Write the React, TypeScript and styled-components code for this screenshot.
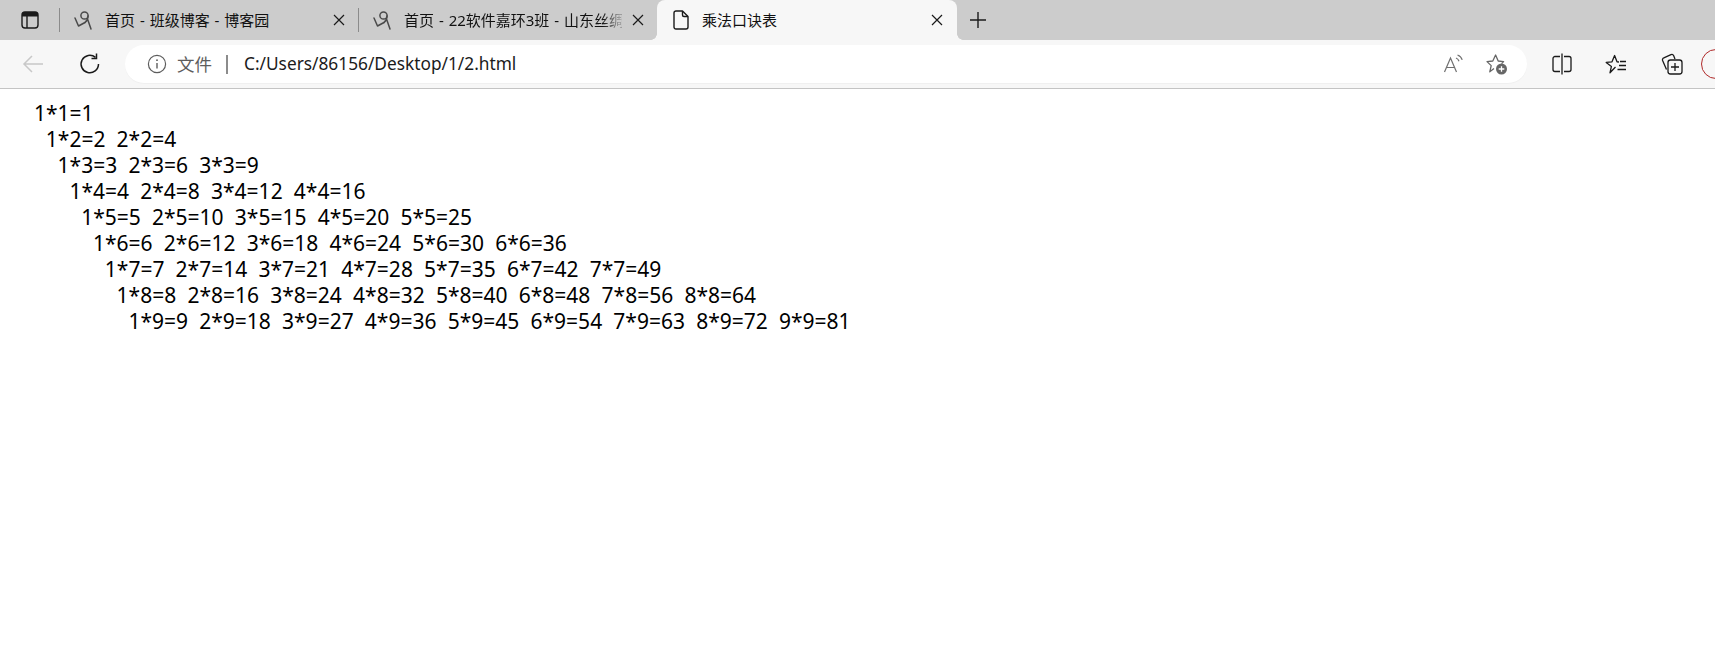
import React from "react";
import styled, { createGlobalStyle } from "styled-components";

const Global = createGlobalStyle`
  html, body { margin: 0; padding: 0; background: #fff; overflow: hidden; }
  body { font-family: "Noto Sans", "Noto Sans CJK SC", sans-serif; }
`;
const Page = styled.div`width: 1715px; height: 667px; overflow: hidden; display: flex; flex-direction: column;`;
const TabStrip = styled.div`height: 40px; background: #ccc; display: flex; align-items: stretch; flex-shrink: 0;`;
const SideButton = styled.div`width: 59px; display: flex; align-items: center; justify-content: center; color: #1a1a1a;`;
const Sep = styled.div`width: 1px; height: 24px; margin-top: 8px; background: #8b8b8b;`;
const Tab = styled.div<{ $active?: boolean }>`
  position: relative; width: ${p => (p.$active ? 300 : 298)}px; height: 40px; box-sizing: border-box;
  display: flex; align-items: center; padding: 0 ${p => (p.$active ? 12 : 11)}px 0 ${p => (p.$active ? 15 : 14)}px;
  background: ${p => (p.$active ? "#f7f7f7" : "transparent")};
  border-radius: ${p => (p.$active ? "8px 8px 0 0" : "0")};
  ${p => p.$active && `
    &::before, &::after { content: ""; position: absolute; bottom: 0; width: 6px; height: 6px; }
    &::before { left: -6px; background: radial-gradient(circle at 0 0, transparent 5.5px, #f7f7f7 6px); }
    &::after { right: -6px; background: radial-gradient(circle at 100% 0, transparent 5.5px, #f7f7f7 6px); }
  `}
`;
const TabIcon = styled.div<{ $gap: number }>`width: 18px; height: 20px; margin-right: ${p => p.$gap}px; flex-shrink: 0; display: flex; align-items: center; justify-content: center;`;
const TabTitle = styled.div<{ $fade?: boolean }>`
  flex: 1; min-width: 0; font-size: 15px; word-spacing: 1px; color: #111; white-space: nowrap; line-height: 20px;
  ${p => p.$fade && `-webkit-mask-image: linear-gradient(to right, #000 91%, rgba(0,0,0,.25) 99%); mask-image: linear-gradient(to right, #000 91%, rgba(0,0,0,.25) 99%);`}
`;
const CloseBox = styled.div`width: 16px; height: 16px; flex-shrink: 0; margin-left: 8px; display: flex; align-items: center; justify-content: center;`;
const NewTab = styled.div`width: 42px; display: flex; align-items: center; justify-content: center;`;
const Toolbar = styled.div`height: 48px; background: #f7f7f7; border-bottom: 1px solid #c4c4c4; display: flex; align-items: center; flex-shrink: 0; overflow: hidden; padding-left: 22px;`;
const NavIcon = styled.div<{ $w: number }>`width: ${p => p.$w}px; height: 24px; flex-shrink: 0; display: flex; align-items: center;`;
const Omnibox = styled.div`
  width: 1402px; height: 38px; background: #fff; border-radius: 19px; display: flex; align-items: center;
  flex-shrink: 0; padding: 0 19px 0 22px; box-sizing: border-box; box-shadow: 0 1px 1px rgba(0,0,0,.03);
`;
const Security = styled.span`font-size: 17.5px; color: #5d5d5d; margin-left: 10px; line-height: 24px;`;
const Divider = styled.div`width: 2px; height: 19px; background: #8c8c8c; margin: 0 16px 0 14px;`;
const Url = styled.span`flex: 1; font-size: 17.3px; color: #1b1b1b; white-space: nowrap; line-height: 24px;`;
const OmniIcon = styled.div<{ $gap: number }>`width: 22px; height: 24px; margin-left: ${p => p.$gap}px; display: flex; align-items: center; justify-content: center;`;
const ToolIcon = styled.div<{ $left: number }>`width: 22px; height: 24px; margin-left: ${p => p.$left}px; flex-shrink: 0; display: flex; align-items: center; justify-content: center;`;
const Profile = styled.div`width: 30px; height: 30px; margin-left: 18px; border-radius: 50%; border: 1.5px solid #b02a2a; flex-shrink: 0; box-sizing: border-box;`;
const Content = styled.div`padding: 11px 0 0 34px; font-family: "Noto Sans", "Noto Sans CJK SC", sans-serif; font-size: 21px; line-height: 26px; color: #000;`;
const Line = styled.div<{ $indent: number }>`display: flex; gap: 11.2px; padding-left: ${p => p.$indent}px; white-space: nowrap; height: 26px;`;
const Cell = styled.span``;

const Favicon = () => (
  <svg width="18" height="20" viewBox="0 0 18 20" fill="none" stroke="#4a4a4a" strokeWidth="1.5" strokeLinejoin="round" strokeLinecap="round">
    <path d="M1 8 L4.5 16 L11 12.5" />
    <circle cx="10.5" cy="5.5" r="3.6" />
    <path d="M14 6 C14 9 13 11 11 12.5 M13.5 9 L17 19" />
  </svg>
);
const Close = () => (
  <svg width="12" height="12" viewBox="0 0 12 12" stroke="#1a1a1a" strokeWidth="1.2"><path d="M1 1 L11 11 M11 1 L1 11" /></svg>
);

const rows = Array.from({ length: 9 }, (_, i) => i + 1);

export default function App() {
  return (
    <Page>
      <Global />
      <TabStrip>
        <SideButton>
          <svg width="18" height="18" viewBox="0 0 18 18" fill="none"><rect x="1" y="1" width="16" height="16" rx="3" stroke="#1a1a1a" strokeWidth="1.4" /><path d="M1 3.5a2.5 2.5 0 0 1 2.5-2.5h11a2.5 2.5 0 0 1 2.5 2.5v2H1z" fill="#1a1a1a" /><path d="M6 5v12" stroke="#1a1a1a" strokeWidth="1.4" /></svg>
        </SideButton>
        <Sep />
        <Tab>
          <TabIcon $gap={13}><Favicon /></TabIcon>
          <TabTitle>首页 - 班级博客 - 博客园</TabTitle>
          <CloseBox><Close /></CloseBox>
        </Tab>
        <Sep />
        <Tab>
          <TabIcon $gap={13}><Favicon /></TabIcon>
          <TabTitle $fade>首页 - 22软件嘉环3班 - 山东丝绸</TabTitle>
          <CloseBox><Close /></CloseBox>
        </Tab>
        <Tab $active>
          <TabIcon $gap={12}>
            <svg width="16" height="20" viewBox="0 0 16 20" fill="none" stroke="#1a1a1a" strokeWidth="1.4" strokeLinejoin="round"><path d="M3 1h6.5L15 6.5V17a2 2 0 0 1-2 2H3a2 2 0 0 1-2-2V3a2 2 0 0 1 2-2z" /><path d="M9.5 1v4a1.5 1.5 0 0 0 1.5 1.5h4" /></svg>
          </TabIcon>
          <TabTitle>乘法口诀表</TabTitle>
          <CloseBox><Close /></CloseBox>
        </Tab>
        <NewTab>
          <svg width="16" height="16" viewBox="0 0 16 16" stroke="#1a1a1a" strokeWidth="1.4"><path d="M8 0v16M0 8h16" /></svg>
        </NewTab>
      </TabStrip>
      <Toolbar>
        <NavIcon $w={57}>
          <svg width="22" height="20" viewBox="0 0 22 20" fill="none" stroke="#c8c8c8" strokeWidth="1.5"><path d="M21 10H2M10 2l-8 8 8 8" /></svg>
        </NavIcon>
        <NavIcon $w={46}>
          <svg width="22" height="22" viewBox="0 0 22 22" fill="none" stroke="#1a1a1a" strokeWidth="1.5"><path d="M19.5 11A8.7 8.7 0 1 1 16.5 4.4" /><path d="M17.5 0.5v5h-5" /></svg>
        </NavIcon>
        <Omnibox>
          <svg width="20" height="20" viewBox="0 0 20 20" fill="none" stroke="#5d5d5d" strokeWidth="1.2"><circle cx="10" cy="10" r="8.6" /><path d="M10 9v5.5" strokeWidth="1.4" /><circle cx="10" cy="6.2" r=".9" fill="#5d5d5d" stroke="none" /></svg>
          <Security>文件</Security>
          <Divider />
          <Url>C:/Users/86156/Desktop/1/2.html</Url>
          <OmniIcon $gap={0}>
            <svg width="22" height="20" viewBox="0 0 22 20" fill="none" stroke="#707070" strokeWidth="1.2"><path d="M1.5 18L7.5 4l6 14M3.5 13.5h8" /><path d="M13 4c1.5 .6 2.5 1.6 3 3.2M14.5 1c2.4 .8 4 2.4 4.7 4.8" /></svg>
          </OmniIcon>
          <OmniIcon $gap={21}>
            <svg width="22" height="22" viewBox="0 0 22 22" fill="none" strokeLinejoin="round">
              <path d="M8 15.5 L3.8 18.8 L5.2 12.6 L1 8.6 L6.8 8 L9.6 2 L12.2 8 L17.6 8.6 L15.6 10.6" stroke="#666" strokeWidth="1.3" />
              <circle cx="15.5" cy="16" r="5.5" fill="#666" />
              <path d="M15.5 13.2v5.6M12.7 16h5.6" stroke="#fff" strokeWidth="1.3" />
            </svg>
          </OmniIcon>
        </Omnibox>
        <ToolIcon $left={24}>
          <svg width="20" height="22" viewBox="0 0 20 22" fill="none" stroke="#1a1a1a" strokeWidth="1.3"><path d="M8 3.5H3A2 2 0 0 0 1 5.5v11a2 2 0 0 0 2 2h5M12 3.5h5a2 2 0 0 1 2 2v11a2 2 0 0 1-2 2h-5M10 .5v21" /></svg>
        </ToolIcon>
        <ToolIcon $left={32}>
          <svg width="22" height="20" viewBox="0 0 22 20" fill="none" stroke="#1a1a1a" strokeWidth="1.3" strokeLinejoin="round">
            <path d="M10.5 13 L5 18.8 L6.4 12.4 L1.2 8.4 L7 7.8 L9.6 1.5 L12 7.8 L14 8" />
            <path d="M15 7.5h6M14 11.5h7M12.5 15.5h8.5" />
          </svg>
        </ToolIcon>
        <ToolIcon $left={34}>
          <svg width="22" height="22" viewBox="0 0 22 22" fill="none" stroke="#1a1a1a" strokeWidth="1.3" strokeLinejoin="round"><path d="M5.5 16.5 1.6 7.5a2 2 0 0 1 1.2-2.6L10 1.6a2 2 0 0 1 2.6 1L14 6" /><rect x="7" y="7" width="14" height="14" rx="2.5" /><path d="M14 10v8M10 14h8" /></svg>
        </ToolIcon>
        <Profile />
      </Toolbar>
      <Content>
        {rows.map(r => (
          <Line key={r} $indent={(r - 1) * 11.8}>
            {rows.slice(0, r).map(c => (
              <Cell key={c}>{`${c}*${r}=${c * r}`}</Cell>
            ))}
          </Line>
        ))}
      </Content>
    </Page>
  );
}
